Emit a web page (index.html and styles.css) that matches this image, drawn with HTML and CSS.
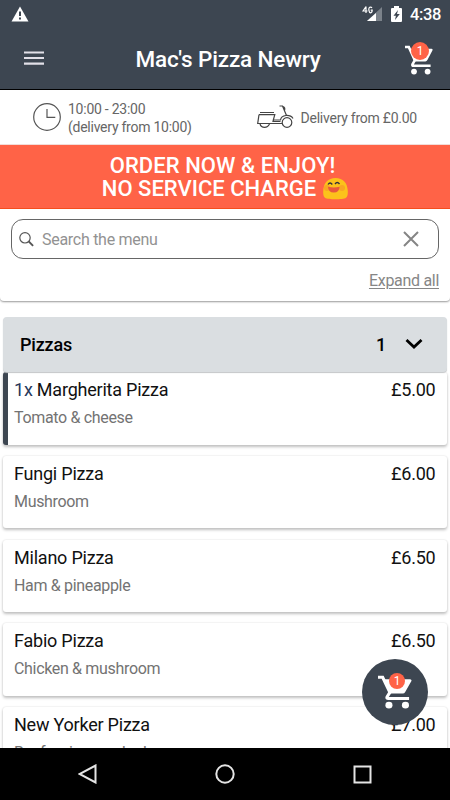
FILE: index.html
```html
<!DOCTYPE html>
<html lang="en">
<head>
<meta charset="utf-8">
<title>Mac's Pizza Newry</title>
<link rel="stylesheet" href="styles.css">
</head>
<body>
<svg class="symbols" aria-hidden="true">
  <symbol id="cart" viewBox="0 0 28 30" preserveAspectRatio="none">
    <path d="M0 2h3.800l6 13.300-2.300 4q-.6 1.500 1 1.500H25.600" fill="none" stroke="#fff" stroke-width="2.600"/>
    <path d="M5 3.800h21.500q1.600.3.900 1.700l-5 9.500q-.7 1.400-2 1.400H9z" fill="#fff"/>
    <circle cx="9" cy="26.600" r="2.900" fill="#fff"/>
    <circle cx="22.600" cy="26.600" r="2.900" fill="#fff"/>
  </symbol>
</svg>
<div class="screen">
  <header class="top">
    <div class="status">
      <svg class="warn" width="18" height="16" viewBox="0 0 18 16"><path d="M9 .5L17.500 15.500H.5z" fill="#fff"/><path d="M9 5.500v4.500M9 11.500v2" stroke="#3d4651" stroke-width="2"/></svg>
      <div class="status-right">
        <svg width="21" height="18" viewBox="0 0 21 18"><path d="M20 1v14H5z" fill="#7b828a"/><path d="M14 7v8H5z" fill="#fff"/><path d="M4 .6L1 5h4.500M4 .6V7M10 1.900Q9 .6 7.700 1.300T7 4.600q.3 2.200 1.700 2.200t1.500-2.700H8.700" fill="none" stroke="#fff" stroke-width="1.200"/></svg>
        <svg class="battery" width="11" height="17" viewBox="0 0 11 17"><path d="M3 2V0h5v2h2q1 0 1 1v12q0 1-1 1H1q-1 0-1-1V3q0-1 1-1z" fill="#fff"/><path d="M7 4L2.500 9.700h2.400L4 14l4.800-6H6z" fill="#3d4651"/></svg>
        <span class="clock">4:38</span>
      </div>
    </div>
    <div class="appbar">
      <svg class="burger" width="20" height="15" viewBox="0 0 20 15"><path d="M0 1.500h20M0 7h20M0 12.700h20" stroke="#e2e0e8" stroke-width="2.200"/></svg>
      <h1>Mac's Pizza Newry</h1>
      <div class="cart"><svg width="28" height="30"><use href="#cart" width="28" height="30"/></svg><span class="badge">1</span></div>
    </div>
  </header>
  <section class="info">
    <div class="hours">
      <svg width="28" height="28" viewBox="0 0 28 28" fill="none" stroke="#555" stroke-width="1.200"><circle cx="14" cy="14" r="13.300"/><path d="M14 6v8.300h8.300"/></svg>
      <p>10:00 - 23:00<br>(delivery from 10:00)</p>
    </div>
    <div class="delivery">
      <svg width="37" height="24" viewBox="7 5.500 37 24" fill="none" stroke="#444" stroke-width="1.200"><path d="M10 13h14M9 15.200h15.800L23.300 20.500h7.200q.5-4 5.500-4.500 5-.3 7 3M9 15.200L7.700 24h24.300M23.500 20.500l-.5 1.500H30.500M10 24.500q1 3.300 4.500 3.300t5-3.300"/><circle cx="37" cy="23" r="4.800"/><path d="M29.500 6.500h3l4 9.500M33 7q2.500 1 1.500 4"/></svg>
      <p>Delivery from £0.00</p>
    </div>
  </section>
  <section class="promo">
    <div class="l1">ORDER NOW &amp; ENJOY!</div>
    <div class="l2"><span>NO SERVICE CHARGE</span>
      <svg width="25" height="22" viewBox="0 0 25 22"><path d="M12.500 0C20 0 24.500 5 24.800 13c.1 2.500 0 5.500-2 7-2.500 1.700-18 1.700-20.600 0-2-1.500-2.100-4.500-2-7C.5 5 5 0 12.500 0z" fill="#fcc21b"/><circle cx="4" cy="10" r="3" fill="#f79329" opacity=".6"/><circle cx="19" cy="10" r="3" fill="#f79329" opacity=".6"/><path d="M5 6.500q2-3 4.300 0M12 6q2.200-3 4.500 0" fill="none" stroke="#30303a" stroke-width="1.300"/><path d="M5 8.800q6 1.300 11.500 0 0 5.800-5.700 5.800T5 8.800z" fill="#e8593c"/></svg>
    </div>
  </section>
  <section class="search">
    <div class="field">
      <svg width="15" height="15" viewBox="0 0 15 15" fill="none" stroke="#555" stroke-width="1.200"><circle cx="6" cy="5.800" r="5.200"/><path d="M9.800 9.500l4.300 4.300" stroke-width="1.800"/></svg>
      <span class="hint">Search the menu</span>
      <svg class="clear" width="16" height="16" viewBox="0 0 16 16" stroke="#858585" stroke-width="2"><path d="M1 1l14 14M15 1L1 15"/></svg>
    </div>
    <a class="expand">Expand all</a>
  </section>
  <main>
    <div class="category"><span>Pizzas</span><span class="count">1</span><svg width="18" height="12" viewBox="0 0 18 12" fill="none" stroke="#000" stroke-width="2.800"><path d="M1.500 1l7.500 7 7.500-7"/></svg></div>
    <article class="item selected"><div class="row"><h2><b>1x</b> Margherita Pizza</h2><span>£5.00</span></div><p>Tomato &amp; cheese</p></article>
    <article class="item"><div class="row"><h2>Fungi Pizza</h2><span>£6.00</span></div><p>Mushroom</p></article>
    <article class="item"><div class="row"><h2>Milano Pizza</h2><span>£6.50</span></div><p>Ham &amp; pineapple</p></article>
    <article class="item"><div class="row"><h2>Fabio Pizza</h2><span>£6.50</span></div><p>Chicken &amp; mushroom</p></article>
    <article class="item"><div class="row"><h2>New Yorker Pizza</h2><span>£7.00</span></div><p>Beef, onion, cooked</p></article>
  </main>
  <div class="fab"><div class="cart"><svg width="34" height="34"><use href="#cart" width="34" height="34"/></svg><span class="badge">1</span></div></div>
  <nav>
    <svg width="19" height="20" viewBox="0 0 19 20"><path d="M17.500 1.500v17L1.500 10z"/></svg>
    <svg width="20" height="20" viewBox="0 0 20 20"><circle cx="10" cy="10" r="8.700"/></svg>
    <svg width="19" height="19" viewBox="0 0 19 19"><rect x="1.500" y="1.500" width="16" height="16"/></svg>
  </nav>
</div>
</body>
</html>
```

FILE: styles.css
```css
* { box-sizing: border-box; }
body { margin: 0; font-family: Roboto, sans-serif; background: #fff; }
h1, h2, p { margin: 0; font-weight: 400; }
svg { display: block; flex: none; }
.symbols { position: absolute; width: 0; height: 0; }
.screen { position: relative; width: 450px; height: 800px; overflow: hidden; display: flex; flex-direction: column; }

.top { height: 90px; background: #3d4651; border-bottom: 1.500px solid #000; flex: none; color: #fff; }
.status { height: 28px; display: flex; justify-content: space-between; padding: 6px 9px 0 11px; }
.status-right { display: flex; }
.battery { margin: 0 8px 0 8px; }
.clock { font-size: 16.500px; font-weight: 500; line-height: 17px; letter-spacing: -0.400px; }
.appbar { height: 61px; display: flex; align-items: center; padding: 0 17px 0 24px; }
.burger { margin-bottom: 1px; }
h1 { flex: 1; text-align: center; font-size: 22.500px; font-weight: 500; line-height: 28px; padding-left: 7px; letter-spacing: -0.150px; }
.cart { position: relative; }
.appbar .cart { margin-top: 2px; }
.badge { position: absolute; left: 6px; top: -3px; width: 18px; height: 18px; border-radius: 50%; background: #ff6347; color: #fff; font-size: 12px; line-height: 18px; text-align: center; }

.info { height: 55px; flex: none; display: flex; justify-content: space-between; padding: 0 33px; color: #666; font-size: 14px; line-height: 18px; letter-spacing: -0.250px; border-bottom: 1px solid #f2dcd8; }
.hours, .delivery { display: flex; align-items: center; gap: 7px; }
.hours p, .delivery p { padding-top: 1px; }

.promo { height: 64px; flex: none; background: #ff6347; border-bottom: 1px solid #fa4a17; color: #fff; font-size: 22px; line-height: 23px; font-weight: 500; padding-top: 9px; text-align: center; }
.l1 { padding-right: 5px; letter-spacing: 0.060px; }
.l2 { display: flex; justify-content: center; align-items: center; gap: 7px; }

.search { height: 92px; flex: none; padding: 10px 11px 0; display: flex; flex-direction: column; border-radius: 0 0 4px 4px; box-shadow: 0 1px 2px #999; }
.field { height: 40px; border: 1px solid #666; border-radius: 12px; display: flex; align-items: center; padding: 0 19px 0 7px; }
.hint { color: #929292; font-size: 16px; margin-left: 8px; flex: 1; letter-spacing: -0.280px; }
.expand { align-self: flex-end; margin-top: 12px; font-size: 16px; line-height: 19px; color: #868686; letter-spacing: -0.300px; text-decoration: underline; text-underline-offset: 2px; text-decoration-thickness: 1px; }

main { margin-top: 16px; padding: 0 3px; flex: 1; min-height: 0; overflow: hidden; display: flex; flex-direction: column; }
.category { height: 55px; flex: none; background: #dadee1; border-radius: 4px; display: flex; align-items: center; padding: 0 24px 0 17px; font-size: 18px; font-weight: 500; letter-spacing: -0.200px; position: relative; box-shadow: 0 1px 1px #c4c6c8; }
.category span:first-child { flex: 1; }
.count { margin-right: 19px; }
.item { height: 72.500px; flex: none; margin-bottom: 11.250px; background: #fff; border-radius: 3px; padding: 7px 11.500px 0 11px; box-shadow: 0 2px 3px #c0c0c0, 0 0 2px #ddd; }
.selected { border-left: 5px solid #3d4651; padding-left: 6px; }
.row { display: flex; justify-content: space-between; font-size: 18px; line-height: 22px; color: #111; letter-spacing: -0.220px; }
h2 { font-size: 18px; }
h2 b { font-weight: 400; color: #26375a; }
.item p { font-size: 16px; line-height: 20px; margin-top: 7px; color: #737373; letter-spacing: -0.330px; }

.fab { position: absolute; left: 362px; top: 659px; width: 66px; height: 66px; border-radius: 50%; background: #3d4651; display: flex; align-items: center; justify-content: center; }
.fab .badge { left: 11px; top: -2px; width: 16px; height: 16px; line-height: 16px; }

nav { height: 52px; flex: none; background: #000; display: flex; justify-content: space-between; align-items: center; padding: 0 78px; }
nav svg { fill: none; stroke: #e4e4e4; stroke-width: 2; }
```
